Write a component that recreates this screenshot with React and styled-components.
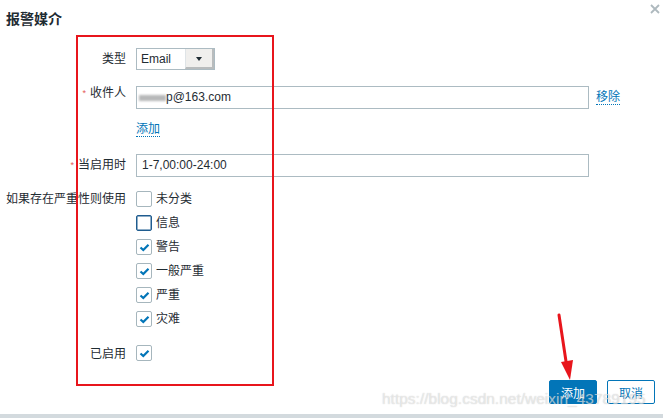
import React, { useState } from "react";
import styled, { createGlobalStyle } from "styled-components";

const GlobalStyle = createGlobalStyle`
  html, body {
    margin: 0;
    padding: 0;
    background: #ffffff;
  }
  body {
    font-family: "Liberation Sans", "Noto Sans CJK SC", sans-serif;
    font-size: 12px;
    color: #1f2c33;
  }
`;

const severities = [
  { name: "未分类", checked: false },
  { name: "信息", checked: false, focused: true },
  { name: "警告", checked: true },
  { name: "一般严重", checked: true },
  { name: "严重", checked: true },
  { name: "灾难", checked: true },
];

const Check = () => (
  <svg width="11" height="9" viewBox="0 0 11 9">
    <path d="M1.5 4.5 L4.3 7 L9.5 1.8" fill="none" stroke="#0275b8" strokeWidth="2.2" />
  </svg>
);

const Checkbox = ({ checked, focused }) => (
  <StyledBox $focused={focused}>{checked && <Check />}</StyledBox>
);

const App = () => {
  const [items] = useState(severities);

  return (
    <>
      <GlobalStyle />
      <Dialog>
        <Header>
          <Title>报警媒介</Title>
          <Close>
            <svg width="10" height="10" viewBox="0 0 10 10">
              <path d="M1 1 L9 9 M9 1 L1 9" stroke="#aeb9be" strokeWidth="1.8" />
            </svg>
          </Close>
        </Header>

        <Body>
          <Row>
            <Label $pt={4}>类型</Label>
            <Select>
              <SelectValue>Email</SelectValue>
              <SelectButton>
                <Caret />
              </SelectButton>
            </Select>
          </Row>

          <Row $mt={16}>
            <Label $pt={0}>
              <Required>*</Required>收件人
            </Label>
            <Input>
              <Blur />p@163.com
            </Input>
            <LinkText $ml={7} $pt={4}>移除</LinkText>
          </Row>

          <Row $mt={13}>
            <Label />
            <LinkText>添加</LinkText>
          </Row>

          <Row $mt={17}>
            <Label $pt={4}>
              <Required>*</Required>当启用时
            </Label>
            <Input>1-7,00:00-24:00</Input>
          </Row>

          <Row $mt={14}>
            <Label $pt={1}>如果存在严重性则使用</Label>
            <CheckList>
              {items.map((s) => (
                <CheckRow key={s.name}>
                  <Checkbox checked={s.checked} focused={s.focused} />
                  <span>{s.name}</span>
                </CheckRow>
              ))}
            </CheckList>
          </Row>

          <Row $mt={18}>
            <Label $pt={2}>已启用</Label>
            <Checkbox checked />
          </Row>
        </Body>

        <Footer>
          <PrimaryButton>添加</PrimaryButton>
          <GhostButton>取消</GhostButton>
        </Footer>
        <BottomBar />

        <Annotation />
        <Arrow width="30" height="75" viewBox="0 0 30 75">
          <path d="M6 3 L14 56" stroke="#e8151c" strokeWidth="3" strokeLinecap="round" />
          <path d="M8 50 L20 48 L17 68 Z" fill="#e8151c" />
        </Arrow>
        <Watermark>https://blog.csdn.net/weixin_43789195</Watermark>
      </Dialog>
    </>
  );
};

const Dialog = styled.div`
  position: relative;
  width: 663px;
  height: 418px;
  display: flex;
  flex-direction: column;
  overflow: hidden;
`;

const Header = styled.div`
  height: 36px;
  display: flex;
  align-items: flex-start;
  justify-content: space-between;
  padding: 0 2px 0 6px;
`;

const Title = styled.h2`
  margin: 10px 0 0;
  font-size: 14px;
  line-height: 18px;
  font-weight: bold;
  color: #1f2c33;
`;

const Close = styled.div`
  margin-top: 3px;
  width: 12px;
  height: 12px;
  display: flex;
  align-items: center;
  justify-content: center;
`;

const Body = styled.div`
  flex: 1;
  padding: 12px 0 0 6px;
  display: flex;
  flex-direction: column;
`;

const Row = styled.div`
  display: flex;
  align-items: flex-start;
  margin-top: ${(p) => p.$mt || 0}px;
`;

const Label = styled.div`
  width: 120px;
  flex-shrink: 0;
  margin-right: 10px;
  text-align: right;
  line-height: 14px;
  padding-top: ${(p) => p.$pt || 0}px;
  white-space: nowrap;
`;

const Required = styled.span`
  color: #e45959;
  font-size: 9px;
  vertical-align: top;
  margin-right: 4px;
`;

const Select = styled.div`
  width: 77px;
  height: 20px;
  border: 1px solid #acbbc2;
  display: flex;
  align-items: stretch;
  background: #fff;
`;

const SelectValue = styled.span`
  flex: 1;
  padding-left: 4px;
  line-height: 20px;
  font-size: 12px;
`;

const SelectButton = styled.span`
  width: 26px;
  background: #f0efed;
  border-left: 1px solid #dfe4e7;
  border-right: 2px solid #b9bcbd;
  border-bottom: 2px solid #b9bcbd;
  display: flex;
  align-items: center;
  justify-content: center;
`;

const Caret = styled.span`
  width: 0;
  height: 0;
  border-left: 3px solid transparent;
  border-right: 3px solid transparent;
  border-top: 4px solid #1f2c33;
  margin-top: 1px;
`;

const Input = styled.div`
  width: 443px;
  height: 21px;
  border: 1px solid #acbbc2;
  padding: 0 3px 0 5px;
  line-height: 21px;
  font-size: 12px;
  display: flex;
  align-items: center;
`;

const Blur = styled.span`
  display: inline-block;
  width: 27px;
  height: 6px;
  margin: 1px 0 0 -3px;
  background: #b7b8b9;
  filter: blur(1px);
`;

const LinkText = styled.span`
  margin-left: ${(p) => p.$ml || 0}px;
  padding-top: ${(p) => p.$pt || 0}px;
  color: #0275b8;
  line-height: 14px;
  border-bottom: 1px dotted #0275b8;
`;

const CheckList = styled.div`
  display: flex;
  flex-direction: column;
  gap: 8px;
`;

const CheckRow = styled.label`
  display: flex;
  align-items: center;
  gap: 4px;
  height: 16px;
  line-height: 16px;
`;

const StyledBox = styled.span`
  box-sizing: border-box;
  width: 16px;
  height: 16px;
  border: 1px solid ${(p) => (p.$focused ? "#1f5c8f" : "#a6b6bd")};
  box-shadow: ${(p) => (p.$focused ? "inset 0 0 0 0.5px #1f5c8f" : "none")};
  border-radius: 2px;
  background: #fff;
  display: flex;
  align-items: center;
  justify-content: center;
  flex-shrink: 0;
`;

const Footer = styled.div`
  display: flex;
  justify-content: flex-end;
  gap: 10px;
  padding: 0 8px 10px 0;
`;

const BaseButton = styled.button`
  box-sizing: border-box;
  width: 48px;
  height: 24px;
  padding: 0;
  font-family: "Liberation Sans", "Noto Sans CJK SC", sans-serif;
  font-size: 12px;
  border-radius: 2px;
  border: 1px solid #0275b8;
  cursor: pointer;
`;

const PrimaryButton = styled(BaseButton)`
  background: #0275b8;
  color: #ffffff;
`;

const GhostButton = styled(BaseButton)`
  background: #ffffff;
  color: #0275b8;
`;

const BottomBar = styled.div`
  height: 4px;
  background: #d3dade;
`;

const Annotation = styled.div`
  position: absolute;
  left: 76px;
  top: 35px;
  width: 194px;
  height: 347px;
  border: 2px solid #e8151c;
  pointer-events: none;
`;

const Arrow = styled.svg`
  position: absolute;
  left: 553px;
  top: 312px;
  pointer-events: none;
`;

const Watermark = styled.div`
  position: absolute;
  left: 382px;
  top: 390px;
  font-family: "Liberation Sans", sans-serif;
  font-size: 15.5px;
  line-height: 18px;
  color: rgba(255, 255, 255, 0.55);
  text-shadow: 0 0 1px rgba(120, 120, 120, 0.45);
  white-space: nowrap;
  pointer-events: none;
`;

export default App;
